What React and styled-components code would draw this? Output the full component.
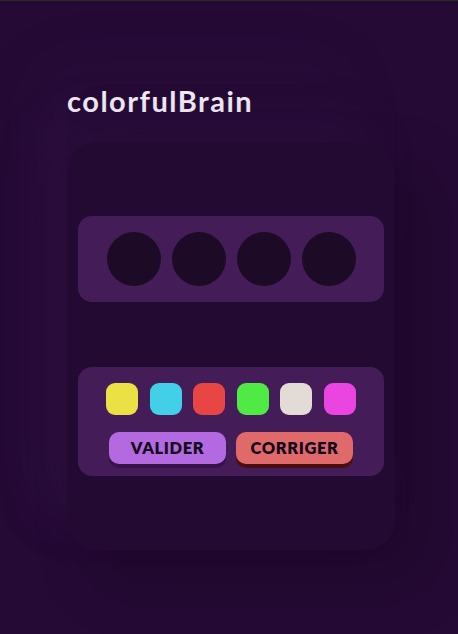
import React from "react";
import styled, { createGlobalStyle } from "styled-components";

const Global = createGlobalStyle`
  html, body {
    margin: 0;
    padding: 0;
    background: #250a35;
  }
  body {
    border-top: 1px solid #2b2a1f;
    font-family: Lato, "Noto Sans", sans-serif;
    min-height: 633px;
  }
`;

const Page = styled.div`
  display: flex;
  padding: 83px 0 0 67px;
`;

const Column = styled.div`
  width: 328px;
  display: flex;
  flex-direction: column;
  border-radius: 40px;
  box-shadow: -40px -30px 60px rgba(90, 50, 120, 0.06);
`;

const Title = styled.h1`
  margin: 0 0 25px 0;
  height: 33px;
  font-family: Lato, "Noto Sans", sans-serif;
  font-weight: 700;
  font-size: 29px;
  line-height: 33px;
  color: #f1edf4;
  letter-spacing: 1.5px;
`;

const Board = styled.div`
  background: #230a32;
  border-radius: 30px;
  padding: 74px 11px;
  display: flex;
  flex-direction: column;
  gap: 65px;
  box-shadow: 30px 30px 60px rgba(10, 0, 15, 0.25),
    -25px -25px 50px rgba(80, 40, 110, 0.12);
`;

const Tray = styled.div`
  background: #441c58;
  border-radius: 14px;
  display: flex;
  flex-direction: column;
  align-items: center;
  padding: ${(p) => p.$pad};
`;

const Row = styled.div`
  display: flex;
  justify-content: center;
  gap: ${(p) => p.$gap}px;
`;

const Slot = styled.div`
  width: 54px;
  height: 54px;
  border-radius: 50%;
  background: #1d0a26;
`;

const Swatch = styled.div`
  width: 32px;
  height: 32px;
  border-radius: 9px;
  background: ${(p) => p.$color};
`;

const Buttons = styled.div`
  display: flex;
  gap: 10px;
  margin-top: 17px;
`;

const Button = styled.button`
  width: 117px;
  height: 32px;
  border: none;
  border-radius: 10px;
  background: ${(p) => p.$bg};
  box-shadow: 0 4px 0 ${(p) => p.$shadow};
  color: #14061c;
  font-family: Lato, "Noto Sans", sans-serif;
  font-weight: 800;
  font-size: 16.5px;
  letter-spacing: 0.6px;
  padding: 0;
  cursor: pointer;
`;

const colors = ["#ebe044", "#42d0e8", "#e84545", "#4fea43", "#e2dbd6", "#ea45e0"];

export default function App() {
  return (
    <>
      <Global />
      <Page>
        <Column>
          <Title>colorfulBrain</Title>
          <Board>
            <Tray $pad="16px 0">
              <Row $gap={11}>
                <Slot />
                <Slot />
                <Slot />
                <Slot />
              </Row>
            </Tray>
            <Tray $pad="16px 0 12px">
              <Row $gap={11.6}>
                {colors.map((c) => (
                  <Swatch key={c} $color={c} />
                ))}
              </Row>
              <Buttons>
                <Button $bg="#b36ae0" $shadow="#36124a">VALIDER</Button>
                <Button $bg="#e06a6a" $shadow="#4a0d12">CORRIGER</Button>
              </Buttons>
            </Tray>
          </Board>
        </Column>
      </Page>
    </>
  );
}
